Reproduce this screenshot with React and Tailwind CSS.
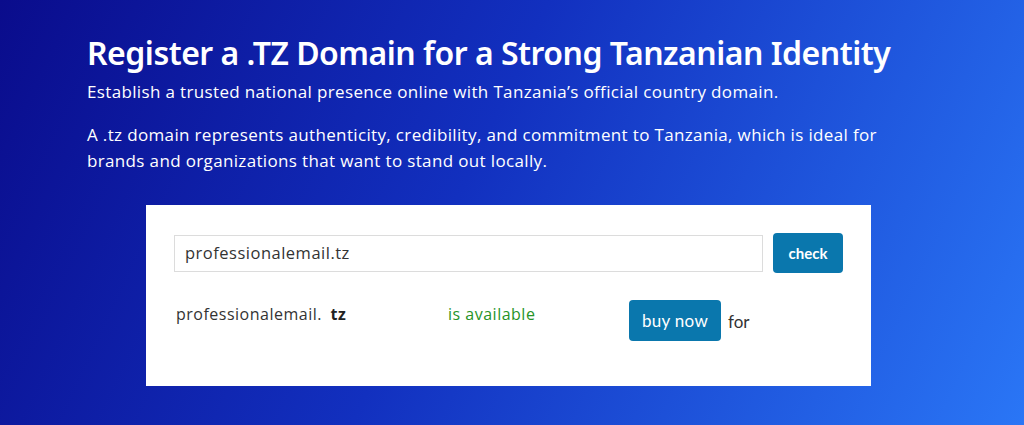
export default function App() {
  return (
    <div className="w-full h-[425px] overflow-hidden bg-[linear-gradient(115deg,#0a0c8c_0%,#1230bf_45%,#2a76f6_100%)] font-['Open_Sans',sans-serif] text-white">
      <div className="pl-[87px] pt-[31px]">
        <h1 className="font-['Noto_Sans',sans-serif] font-semibold text-[32px] leading-[44px] tracking-[-0.5px]">
          Register a .TZ Domain for a Strong Tanzanian Identity
        </h1>
        <p className="mt-[4px] text-[17px] leading-[26px] tracking-[0.35px]">
          Establish a trusted national presence online with Tanzania’s official country domain.
        </p>
        <p className="mt-[17px] text-[17px] leading-[26px] tracking-[0.35px] max-w-[820px]">
          A .tz domain represents authenticity, credibility, and commitment to Tanzania, which is ideal for brands and
          organizations that want to stand out locally.
        </p>
      </div>

      <div className="ml-[146px] mt-[31px] w-[725px] h-[181px] bg-white pt-[28px] pl-[28px] pr-[28px]">
        <div className="flex items-center gap-[10px]">
          <div className="w-[589px] h-[37px] border border-[#dcdcdc] flex items-center pl-[10px] text-[16.5px] tracking-[0.5px] text-[#333]">
            professionalemail.tz
          </div>
          <button className="w-[70px] h-[40px] rounded-[4px] bg-[#0a77ad] text-white font-['Lato',sans-serif] font-bold text-[15px]">
            check
          </button>
        </div>
        <div className="mt-[27px] flex items-start text-[16px] tracking-[0.5px] text-[#333]">
          <span className="w-[274px] pl-[2px] mt-[2px]">
            professionalemail. <b className="font-bold text-[#222] ml-[4px]">tz</b>
          </span>
          <span className="w-[181px] mt-[2px] text-[#279327]">is available</span>
          <button className="w-[92px] h-[41px] rounded-[4px] bg-[#0a77ad] text-white font-['Lato',sans-serif] text-[17px] tracking-[0.3px]">
            buy now
          </button>
          <span className="ml-[7px] mt-[9px] font-['Lato',sans-serif] text-[17px] tracking-normal">for</span>
        </div>
      </div>
    </div>
  );
}
